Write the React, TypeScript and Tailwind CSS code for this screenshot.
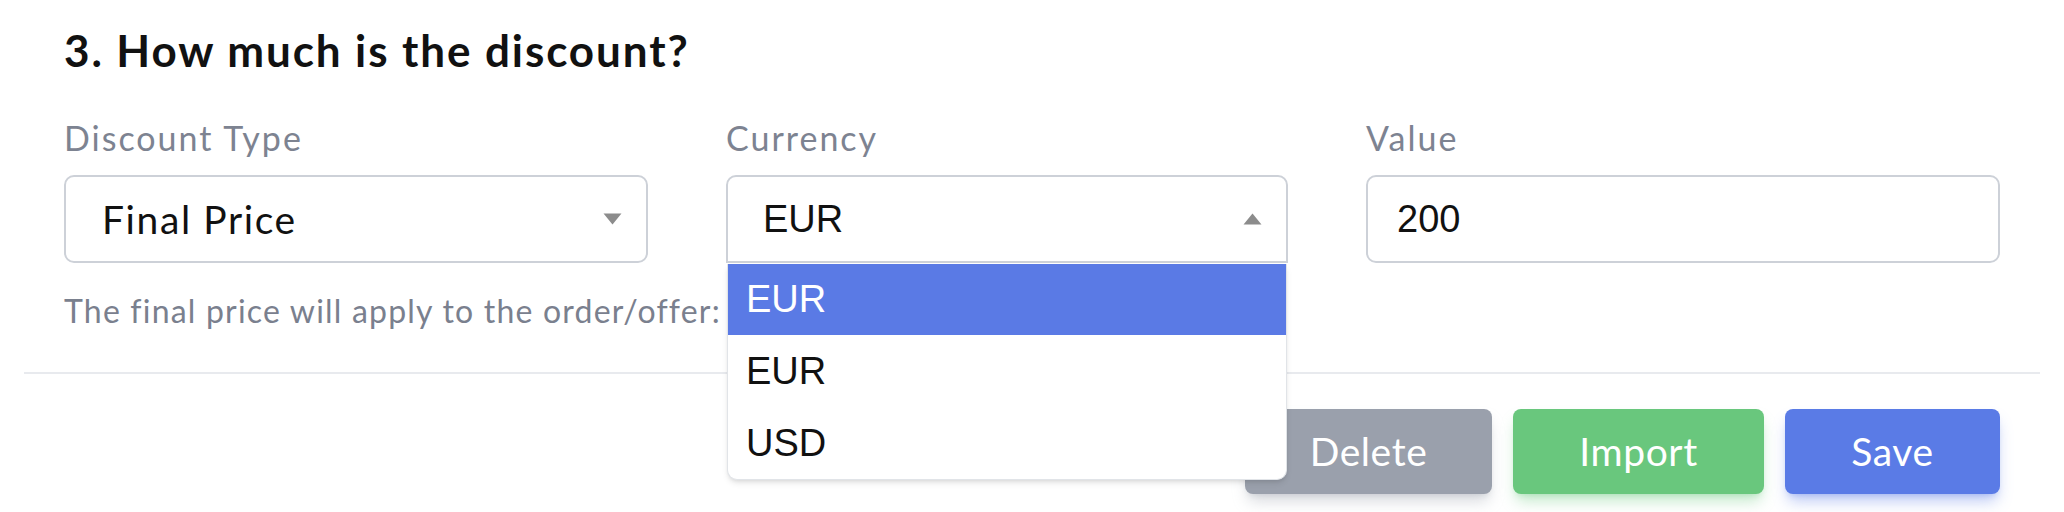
import React from 'react';

const uiFont = { fontFamily: 'Lato, "Noto Sans", sans-serif' };
const sysFont = { fontFamily: '"Liberation Sans", Arial, sans-serif' };

const Caret = ({ up }: { up?: boolean }) => (
  <svg width="19" height="12" viewBox="0 0 19 12" className="shrink-0">
    {up ? (
      <path d="M9.5 0.5 L18.5 11.5 L0.5 11.5 Z" fill="#8c8c8c" />
    ) : (
      <path d="M0.5 0.5 L18.5 0.5 L9.5 11.5 Z" fill="#8c8c8c" />
    )}
  </svg>
);

const Label = ({ children }: { children: React.ReactNode }) => (
  <label className="block text-[34px] leading-[40px] tracking-[2px] text-[#7d8391]">{children}</label>
);

const options = ['EUR', 'EUR', 'USD'];

const App: React.FC = () => {
  return (
    <div className="min-h-[512px] bg-white px-[24px]" style={uiFont}>
      <section className="px-[40px] pt-[24px]">
        <h2 className="text-[44px] font-bold leading-[53px] tracking-[1.9px] text-[#111111]">
          3. How much is the discount?
        </h2>

        <div className="mt-[41px] grid grid-cols-[584px_562px_1fr] gap-x-[78px]">
          <div>
            <Label>Discount Type</Label>
            <div className="mt-[17px] flex h-[88px] items-center justify-between rounded-[10px] border-2 border-[#cdd1d8] bg-white pl-[36px] pr-[24px]">
              <span className="text-[39px] tracking-[1.6px] text-[#111111]">Final Price</span>
              <Caret />
            </div>
          </div>

          <div className="relative z-10">
            <Label>Currency</Label>
            <div className="mt-[17px] flex h-[88px] items-center justify-between rounded-t-[10px] border-2 border-[#cdd1d8] bg-white pl-[35px] pr-[24px]">
              <span className="text-[38px] text-[#111111]" style={sysFont}>
                EUR
              </span>
              <Caret up />
            </div>
            <ul
              className="absolute left-[1px] right-[1px] top-[146px] overflow-hidden rounded-b-[10px] border border-t-0 border-[#e1e4e8] bg-white shadow-md"
              style={sysFont}
            >
              {options.map((opt, i) => (
                <li
                  key={i}
                  className={
                    i === 0
                      ? 'h-[71px] bg-[#5a7ae5] pl-[18px] text-[38px] leading-[71px] text-white'
                      : 'h-[72px] pl-[18px] text-[38px] leading-[72px] text-[#111111]'
                  }
                >
                  {opt}
                </li>
              ))}
            </ul>
          </div>

          <div>
            <Label>Value</Label>
            <div className="mt-[17px] flex h-[88px] items-center rounded-[10px] border-2 border-[#cdd1d8] bg-white pl-[29px]">
              <span className="text-[38px] text-[#111111]" style={sysFont}>
                200
              </span>
            </div>
          </div>
        </div>

        <p className="mt-[28px] text-[32px] leading-[40px] tracking-[1.2px] text-[#7a808e]">
          The final price will apply to the order/offer:
        </p>
      </section>

      <div className="mt-[41px] h-[2px] bg-[#e8eaee]" />

      <div className="flex justify-end gap-[21px] px-[40px] pt-[35px]">
        <button className="h-[85px] w-[247px] rounded-[8px] bg-[#9aa0ac] text-[39px] tracking-[0.6px] text-white shadow-lg shadow-[#9aa0ac]/40">
          Delete
        </button>
        <button className="h-[85px] w-[251px] rounded-[8px] bg-[#69c77d] text-[39px] tracking-[0.6px] text-white shadow-lg shadow-[#69c77d]/40">
          Import
        </button>
        <button className="h-[85px] w-[215px] rounded-[8px] bg-[#5a7be6] text-[39px] tracking-[0.6px] text-white shadow-lg shadow-[#5a7be6]/40">
          Save
        </button>
      </div>
    </div>
  );
};

export default App;
